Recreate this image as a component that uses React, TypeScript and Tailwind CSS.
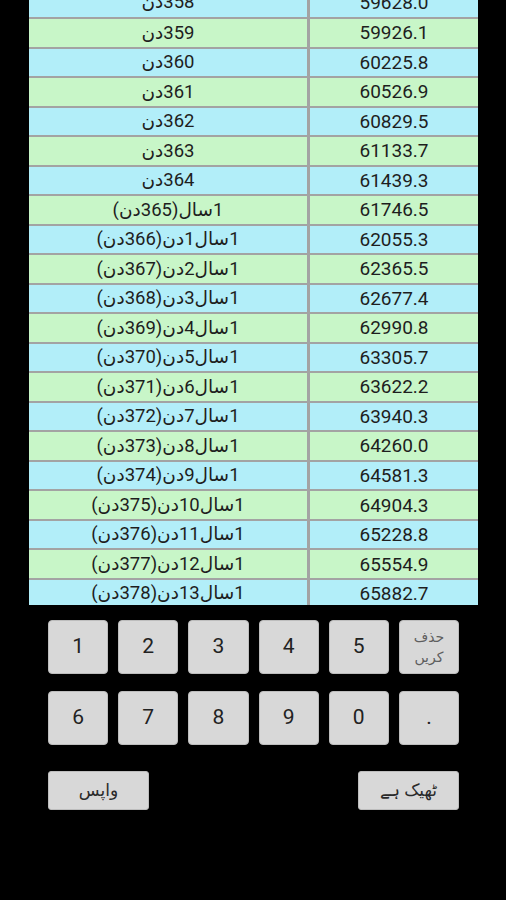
import React from "react";

const values: [number, string][] = [
  [358, "59628.0"],
  [359, "59926.1"],
  [360, "60225.8"],
  [361, "60526.9"],
  [362, "60829.5"],
  [363, "61133.7"],
  [364, "61439.3"],
  [365, "61746.5"],
  [366, "62055.3"],
  [367, "62365.5"],
  [368, "62677.4"],
  [369, "62990.8"],
  [370, "63305.7"],
  [371, "63622.2"],
  [372, "63940.3"],
  [373, "64260.0"],
  [374, "64581.3"],
  [375, "64904.3"],
  [376, "65228.8"],
  [377, "65554.9"],
  [378, "65882.7"],
];

function label(n: number): string {
  if (n < 365) return `${n}دن`;
  if (n === 365) return `1سال(365دن)`;
  return `1سال${n - 365}دن(${n}دن)`;
}

const font = { fontFamily: "Roboto, 'DejaVu Sans', sans-serif" };

export default function App() {
  return (
    <div className="w-[506px] h-[900px] bg-black overflow-hidden" style={font}>
      <div className="h-[605px] overflow-hidden">
        <div className="mx-[29px] w-[449px] mt-[-12.5px]">
          {values.map(([n, v], i) => {
            const bg = n % 2 === 0 ? "bg-[#b2eef9]" : "bg-[#c8f6c8]";
            return (
              <div
                key={n}
                className={`flex h-[29.53px] ${i > 0 ? "border-t-2" : ""} border-[#a3a3a3] ${bg}`}
              >
                <div
                  dir="rtl"
                  className="w-[278px] flex items-center justify-center text-[18.5px] text-[#1e1e1e] leading-none"
                >
                  {label(n)}
                </div>
                <div className="w-[3px] bg-[#a3a3a3]" />
                <div className="flex-1 flex items-center justify-center text-[19px] text-[#1e1e1e] leading-none">
                  {v}
                </div>
              </div>
            );
          })}
        </div>
      </div>

      <div className="pl-[48px] pr-[47px] mt-[15px]">
        <div className="grid grid-cols-6 gap-x-[10px] gap-y-[17px]">
          {["1", "2", "3", "4", "5"].map((k) => (
            <Key key={k}>{k}</Key>
          ))}
          <div className="h-[54px] rounded-[4px] bg-[#d8d8d8] border border-[#bdbdbd] flex flex-col items-center justify-center text-[14px] leading-[20px] text-[#5e5e5e]">
            <span>حذف</span>
            <span>کریں</span>
          </div>
          {["6", "7", "8", "9", "0", "."].map((k) => (
            <Key key={k}>{k}</Key>
          ))}
        </div>
        <div className="flex justify-between mt-[26px]">
          <div className="w-[101px] h-[39px] rounded-[3px] bg-[#d8d8d8] border border-[#bdbdbd] flex items-center justify-center text-[17px] text-[#2a2a2a]">
            واپس
          </div>
          <div className="w-[101px] h-[39px] rounded-[3px] bg-[#d8d8d8] border border-[#bdbdbd] flex items-center justify-center text-[17px] text-[#2a2a2a]">
            ٹھیک ہے
          </div>
        </div>
      </div>
    </div>
  );
}

function Key({ children }: { children: React.ReactNode }) {
  return (
    <div className="h-[54px] rounded-[4px] bg-[#d8d8d8] border border-[#bdbdbd] flex items-center justify-center text-[21px] text-[#222]">
      {children}
    </div>
  );
}
